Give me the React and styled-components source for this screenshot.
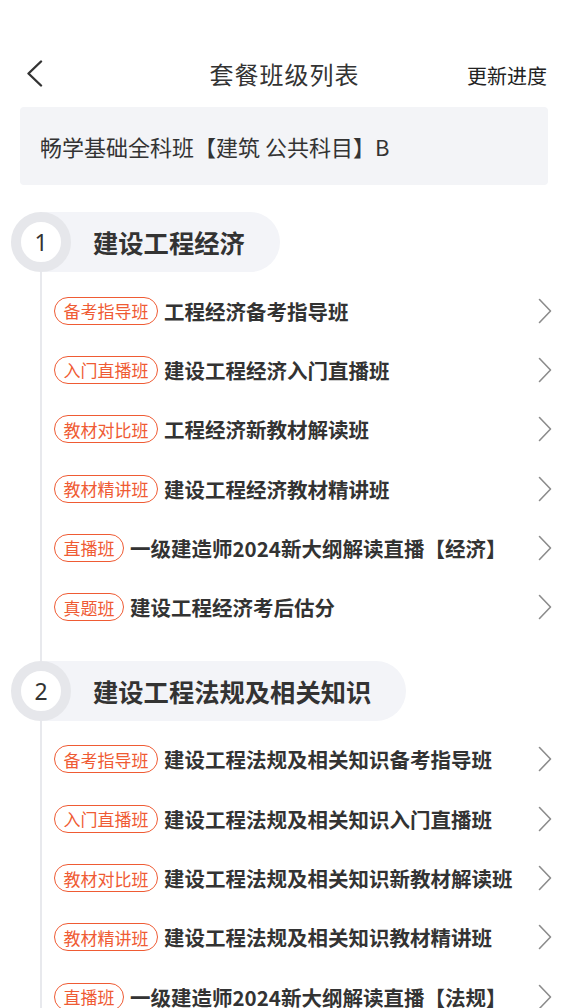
import styled, { createGlobalStyle } from "styled-components";

const GlobalStyle = createGlobalStyle`
    body {
        margin: 0;
        background: #ffffff;
        font-family: "Noto Sans CJK SC", "Noto Sans", sans-serif;
        color: #333333;
    }
`

const Page = styled.div`
    width: 566px;
    min-height: 1008px;
    padding-top: 48px;
    box-sizing: border-box;
    overflow: hidden;
`

const NavBar = styled.div`
    height: 50px;
    display: grid;
    grid-template-columns: 1fr auto 1fr;
    align-items: center;
    padding: 0 19px 0 26px;
`

const BackButton = styled.div`
    display: flex;
    align-items: center;
`

const NavTitle = styled.div`
    font-size: 24px;
    color: #333;
    letter-spacing: 1px;
    margin-left: -4px;
`

const NavAction = styled.div`
    justify-self: end;
    font-size: 20px;
    color: #222;
    padding-top: 4px;
`

const InfoBox = styled.div`
    margin: 9px 18px 0 20px;
    height: 78px;
    background: #f3f4f7;
    border-radius: 4px;
    display: flex;
    align-items: center;
    padding-left: 20px;
    font-size: 22px;
    color: #333;
`

const Timeline = styled.div`
    margin: 27px 0 0 40px;
    border-left: 2px solid #e8e9ed;
`

const Section = styled.div`
    & + & {
        margin-top: 24px;
    }
`

const SectionHeader = styled.div`
    display: flex;
    align-items: center;
    margin-left: -31px;
    margin-bottom: 9px;
`

const StepCircle = styled.div`
    position: relative;
    z-index: 1;
    width: 40px;
    height: 40px;
    border: 10px solid #e6e7eb;
    border-radius: 50%;
    background: #fff;
    display: flex;
    align-items: center;
    justify-content: center;
    font-size: 23px;
    font-family: "Noto Sans", sans-serif;
    font-weight: 400;
    color: #333;
`

const SectionPill = styled.div`
    height: 60px;
    margin-left: -30px;
    padding: 0 35px 0 52px;
    background: #f3f4f8;
    border-radius: 0 30px 30px 0;
    display: flex;
    align-items: center;
    font-size: 25.3px;
    font-weight: 700;
    color: #333;
`

const Row = styled.div`
    height: 59.3px;
    display: flex;
    align-items: center;
    padding: 0 14px 0 12px;
`

const Tag = styled.span`
    flex-shrink: 0;
    height: 26px;
    padding: 0 8.5px;
    border: 1.5px solid #ef5b34;
    border-radius: 15px;
    display: flex;
    align-items: center;
    font-size: 17px;
    color: #ef5b34;
`

const RowTitle = styled.span`
    flex: 1;
    margin-left: 6px;
    font-size: 20.5px;
    font-weight: 700;
    color: #333;
    white-space: nowrap;
`

const Chevron = ({ color = "#8c8c8c", width = 1.6 }) => (
    <svg width="14" height="26" viewBox="0 0 14 26" fill="none">
        <path d="M1.5 1.5 L12.5 13 L1.5 24.5" stroke={color} strokeWidth={width} strokeLinecap="round" strokeLinejoin="round" />
    </svg>
)

const BackIcon = () => (
    <svg width="17" height="27" viewBox="0 0 17 27" fill="none">
        <path d="M15 1.5 L2.5 13.5 L15 25.5" stroke="#333" strokeWidth="2.4" strokeLinecap="round" strokeLinejoin="round" />
    </svg>
)

const sections = [
    {
        no: 1,
        name: "建设工程经济",
        classes: [
            { tag: "备考指导班", title: "工程经济备考指导班" },
            { tag: "入门直播班", title: "建设工程经济入门直播班" },
            { tag: "教材对比班", title: "工程经济新教材解读班" },
            { tag: "教材精讲班", title: "建设工程经济教材精讲班" },
            { tag: "直播班", title: "一级建造师2024新大纲解读直播【经济】" },
            { tag: "真题班", title: "建设工程经济考后估分" },
        ],
    },
    {
        no: 2,
        name: "建设工程法规及相关知识",
        classes: [
            { tag: "备考指导班", title: "建设工程法规及相关知识备考指导班" },
            { tag: "入门直播班", title: "建设工程法规及相关知识入门直播班" },
            { tag: "教材对比班", title: "建设工程法规及相关知识新教材解读班" },
            { tag: "教材精讲班", title: "建设工程法规及相关知识教材精讲班" },
            { tag: "直播班", title: "一级建造师2024新大纲解读直播【法规】" },
        ],
    },
]

const App = () => {
    return (
        <Page>
            <GlobalStyle />
            <NavBar>
                <BackButton><BackIcon /></BackButton>
                <NavTitle>套餐班级列表</NavTitle>
                <NavAction>更新进度</NavAction>
            </NavBar>
            <InfoBox>畅学基础全科班【建筑 公共科目】B</InfoBox>
            <Timeline>
                {sections.map(section => (
                    <Section key={section.no}>
                        <SectionHeader>
                            <StepCircle>{section.no}</StepCircle>
                            <SectionPill>{section.name}</SectionPill>
                        </SectionHeader>
                        {section.classes.map(item => (
                            <Row key={item.title}>
                                <Tag>{item.tag}</Tag>
                                <RowTitle>{item.title}</RowTitle>
                                <Chevron />
                            </Row>
                        ))}
                    </Section>
                ))}
            </Timeline>
        </Page>
    )
}

export default App
